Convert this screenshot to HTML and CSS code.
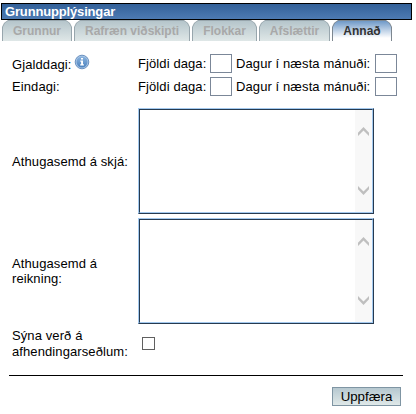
FILE: index.html
```
<!DOCTYPE html>
<html lang="is">
<head>
    <meta charset="UTF-8">
    <title>Grunnupplýsingar</title>
    <link rel="stylesheet" href="styles.css">
</head>
<body>
    <div class="title-bar">Grunnupplýsingar</div>
    <div class="tabs">
        <div class="tab tab-grunnur"><span>Grunnur</span></div>
        <div class="tab tab-rafraen"><span>Rafræn viðskipti</span></div>
        <div class="tab tab-flokkar"><span>Flokkar</span></div>
        <div class="tab tab-afslaettir"><span>Afslættir</span></div>
        <div class="tab tab-annad active"><span>Annað</span></div>
    </div>

    <div class="form">
        <div class="row row-due">
            <div class="label">Gjalddagi:
                <svg class="info" width="16" height="16" viewBox="0 0 16 16">
                    <defs>
                        <linearGradient id="infoFill" x1="0" y1="0" x2="0" y2="1">
                            <stop offset="0" stop-color="#8bb4df"/>
                            <stop offset="1" stop-color="#4c82be"/>
                        </linearGradient>
                    </defs>
                    <circle cx="8" cy="8" r="6.8" fill="#a9c6e6" stroke="#5f88ba" stroke-width=".9"/>
                    <circle cx="8" cy="8" r="5.5" fill="url(#infoFill)"/>
                    <path d="M7 4h2v1.6H7zM6.3 6.6H9v3.7h.9v1.2H6.2v-1.2h.9V7.7h-.8z" fill="#fff"/>
                </svg>
            </div>
            <span class="days">Fjöldi daga:</span><input type="text" class="small">
            <span class="month">Dagur í næsta mánuði:</span><input type="text" class="small">
        </div>
        <div class="row row-final">
            <div class="label">Eindagi:</div>
            <span class="days">Fjöldi daga:</span><input type="text" class="small">
            <span class="month">Dagur í næsta mánuði:</span><input type="text" class="small">
        </div>
        <div class="row row-note">
            <div class="label">Athugasemd á skjá:</div>
            <div class="textarea">
                <div class="textarea-inner">
                    <div class="scrollbar">
                        <svg width="11" height="9" viewBox="0 0 11 9"><path d="M0 5.8L5.5 0L11 5.8V9L5.5 3.6L0 9z"/></svg>
                        <svg width="11" height="9" viewBox="0 0 11 9"><path d="M0 3.2L5.5 9L11 3.2V0L5.5 5.4L0 0z"/></svg>
                    </div>
                </div>
            </div>
        </div>
        <div class="row row-note">
            <div class="label">Athugasemd á<br>reikning:</div>
            <div class="textarea">
                <div class="textarea-inner">
                    <div class="scrollbar">
                        <svg width="11" height="9" viewBox="0 0 11 9"><path d="M0 5.8L5.5 0L11 5.8V9L5.5 3.6L0 9z"/></svg>
                        <svg width="11" height="9" viewBox="0 0 11 9"><path d="M0 3.2L5.5 9L11 3.2V0L5.5 5.4L0 0z"/></svg>
                    </div>
                </div>
            </div>
        </div>
        <div class="row row-check">
            <div class="label">Sýna verð á afhendingarseðlum:</div>
            <input type="checkbox" class="check">
        </div>
    </div>

    <div class="footer">
        <button class="update">Uppfæra</button>
    </div>
</body>
</html>
```
FILE: styles.css
```
* {
    box-sizing: border-box;
}

body {
    margin: 0;
    padding: 3px 4px 0 1px;
    background: #fff;
    color: #000;
    font-family: "Liberation Sans", Arial, sans-serif;
    font-size: 13px;
    line-height: 15px;
    letter-spacing: 0.1px;
}

.title-bar {
    height: 17px;
    padding-left: 3px;
    border: 1px solid #000;
    background: linear-gradient(#336199, #4d7ab2);
    color: #fff;
    font-weight: bold;
    line-height: 16px;
    letter-spacing: -0.16px;
}

/* tabs */
.tabs {
    display: flex;
    gap: 2px;
    height: 21px;
    padding-left: 1px;
    font-size: 12px;
    letter-spacing: 0;
}

.tab {
    background: #98a6ad;
    padding: 1px 1px 0;
    clip-path: polygon(6px 0, calc(100% - 6px) 0, calc(100% - 2px) 3px, 100% 7px, 100% 100%, 0 100%, 0 7px, 2px 3px);
    color: #a8a8a8;
    font-weight: bold;
    text-align: center;
}

.tab span {
    display: block;
    height: 20px;
    background: linear-gradient(#b5c5cb, #dfe7e7);
    clip-path: polygon(5px 0, calc(100% - 5px) 0, calc(100% - 2px) 2px, 100% 6px, 100% 100%, 0 100%, 0 6px, 2px 2px);
    line-height: 21px;
}

.tab-grunnur {
    width: 70px;
}

.tab-rafraen {
    width: 116px;
}

.tab-flokkar {
    width: 65px;
}

.tab-afslaettir {
    width: 71px;
}

.tab-annad {
    width: 60px;
}

.tab.active {
    background: #7d8790;
    color: #333;
}

.tab.active span {
    background: linear-gradient(#6f99c8, #fff 85%);
}

/* form */
.form {
    padding: 13px 0 0 11px;
}

.row {
    display: flex;
    align-items: center;
}

.label {
    width: 126px;
    flex: none;
}

.row-due,
.row-final {
    height: 19px;
    margin-bottom: 4px;
}

.row-due .label {
    padding-top: 1px;
}

.info {
    vertical-align: -1px;
    margin-top: -4px;
    margin-left: -1px;
}

.days {
    width: 72px;
}

.month {
    width: 139px;
    margin-left: 4px;
    white-space: nowrap;
}

.small {
    width: 22px;
    height: 19px;
    margin: 0;
    padding: 0;
    border: 1px solid #7b8798;
}

.row-note {
    height: 106px;
    margin-bottom: 4px;
}

.row-final {
    margin-bottom: 12px;
}

.textarea {
    width: 236px;
    height: 106px;
    border: 1px solid;
    border-color: #a3c9ef #263a50 #263a50 #a3c9ef;
}

.textarea-inner {
    height: 100%;
    border: 1px solid;
    border-color: #263a50 #a3c9ef #a3c9ef #263a50;
    display: flex;
    justify-content: flex-end;
}

.scrollbar {
    width: 17px;
    background: #f8f8f8;
    display: flex;
    flex-direction: column;
    justify-content: space-between;
    align-items: center;
    padding: 17px 0;
}

.scrollbar path {
    fill: #bfbfbf;
}

.row-check {
    height: 31px;
    line-height: 16px;
}

.check {
    appearance: none;
    width: 13px;
    height: 13px;
    margin: 0 0 0 4px;
    border: 1px solid #606060;
    background: #fff;
}

.footer {
    margin: 16px 9px 0 8px;
    padding: 11px 2px 0 0;
    border-top: 1px solid #000;
    display: flex;
    justify-content: flex-end;
}

.update {
    width: 69px;
    height: 19px;
    padding: 0;
    border: 1px solid #7f95a3;
    background: linear-gradient(#b6c8d0, #dfe8e8);
    color: #000;
    font: 13.3px "Liberation Sans", Arial, sans-serif;
    line-height: 17px;
}
```
